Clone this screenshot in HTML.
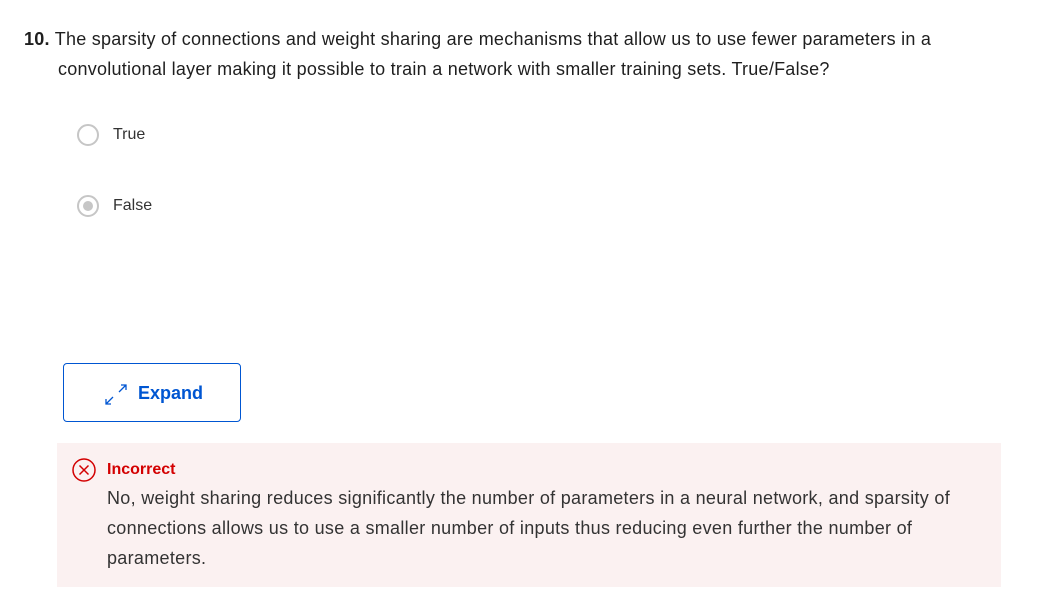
<!DOCTYPE html>
<html><head><meta charset="utf-8">
<style>
body{margin:0;width:1041px;height:616px;background:#fff;font-family:"Liberation Sans",sans-serif;color:#1f1f1f;position:relative;overflow:hidden}
.q{position:absolute;left:24px;top:24px;font-size:18px;line-height:30px;white-space:nowrap;letter-spacing:0.25px}
.q b{font-weight:bold}
.radio{position:absolute;left:77px;width:22px;height:22px;border:2px solid #c6c6c6;border-radius:50%;box-sizing:border-box}
.lbl{position:absolute;left:113px;font-size:16px;color:#333}
.btn{position:absolute;left:63px;top:363px;width:178px;height:59px;box-sizing:border-box;border:1px solid #0056d2;border-radius:4px;color:#0056d2;font-weight:bold;font-size:18px}
.fb{position:absolute;left:57px;top:443px;width:944px;height:144px;background:#fbf1f1}
.ft{position:absolute;left:50px;top:15px;font-size:18px;line-height:30px;white-space:nowrap;color:#333;letter-spacing:0.3px}
</style></head><body>
<div class="q"><b>10.</b> The sparsity of connections and weight sharing are mechanisms that allow us to use fewer parameters in a<br><span style="padding-left:34px">convolutional layer making it possible to train a network with smaller training sets. True/False?</span></div>
<div class="radio" style="top:124px"></div>
<div class="lbl" style="top:126px">True</div>
<div class="radio" style="top:195px"><div style="position:absolute;left:4px;top:4px;width:10px;height:10px;border-radius:50%;background:#c6c6c6"></div></div>
<div class="lbl" style="top:197px">False</div>
<div class="btn">
<svg style="position:absolute;left:40px;top:20px" width="24" height="22" viewBox="0 0 24 22" fill="none" stroke="#0056d2" stroke-width="1.3"><path d="M2 20L9 13M15 8L22 1M17 1h5v5M2 15v5h5"/></svg>
<span style="position:absolute;left:74px;top:19px">Expand</span></div>
<div class="fb">
<svg style="position:absolute;left:15px;top:15px" width="24" height="24" viewBox="0 0 24 24" fill="none" stroke="#d30001" stroke-width="1.5"><circle cx="12" cy="12" r="11"/><path d="M7.5 7.5l9 9M16.5 7.5l-9 9"/></svg>
<div style="position:absolute;left:50px;top:18px;font-size:16px;font-weight:bold;color:#d30001">Incorrect</div>
<div class="ft" style="top:40px">No, weight sharing reduces significantly the number of parameters in a neural network, and sparsity of<br>connections allows us to use a smaller number of inputs thus reducing even further the number of<br>parameters.</div>
</div>
</body></html>
